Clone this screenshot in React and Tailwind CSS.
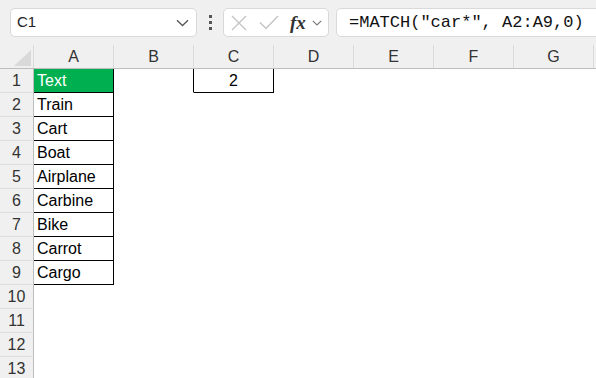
import React from "react";

const cols = ["A", "B", "C", "D", "E", "F", "G"];
const aVals = ["Text", "Train", "Cart", "Boat", "Airplane", "Carbine", "Bike", "Carrot", "Cargo"];

function Cell({ r, c }) {
  let border = "border-transparent";
  let bg = "";
  let content = null;
  if (c === 0 && r <= 9) {
    border = "border-black";
    content = aVals[r - 1];
    if (r === 1) bg = "bg-[#00b050] text-white";
  }
  if (r === 1 && c === 1) border = "border-b-transparent border-r-black";
  if (r === 1 && c === 2) {
    border = "border-black";
    content = "2";
  }
  return (
    <div
      className={`w-[80px] h-[24px] shrink-0 border-r border-b ${border} ${bg} flex items-center ${
        c === 2 ? "justify-center" : "pl-[3px]"
      }`}
    >
      {content}
    </div>
  );
}

export default function App() {
  const rows = Array.from({ length: 13 }, (_, i) => i + 1);
  return (
    <div
      className="w-[596px] h-[378px] overflow-hidden bg-white text-[16px] text-black"
      style={{ fontFamily: '"Liberation Sans", Arial, sans-serif' }}
    >
      {/* toolbar */}
      <div className="h-[45px] bg-[#f0f0f0] flex items-start pt-[8px] pl-[10px] overflow-hidden">
        <div className="w-[187px] h-[29px] shrink-0 rounded-[5px] bg-white border border-[#d9d9d9] flex items-center pl-[6px] pr-[7px] text-[15px] text-[#222]">
          <span className="flex-1">C1</span>
          <svg width="13" height="8" viewBox="0 0 13 8" fill="none">
            <path d="M1 1.2 L6.5 6.5 L12 1.2" stroke="#555" strokeWidth="1.3" />
          </svg>
        </div>
        <div className="w-[26px] h-[29px] shrink-0 flex flex-col items-center justify-center gap-[3px]">
          <div className="w-[3px] h-[3px] bg-[#555]" />
          <div className="w-[3px] h-[3px] bg-[#555]" />
          <div className="w-[3px] h-[3px] bg-[#555]" />
        </div>
        <div className="w-[106px] h-[29px] shrink-0 rounded-[5px] bg-white border border-[#d9d9d9] flex items-center pl-[7px]">
          <svg width="16" height="16" viewBox="0 0 16 16" fill="none">
            <path d="M1 1 L15 15 M15 1 L1 15" stroke="#c4c4c4" strokeWidth="1.4" />
          </svg>
          <svg className="ml-[12px]" width="20" height="15" viewBox="0 0 20 15" fill="none">
            <path d="M1 7.5 L7 13.5 L19 1" stroke="#c4c4c4" strokeWidth="1.4" />
          </svg>
          <span
            className="ml-[11px] italic font-bold text-[19px] text-[#333] leading-none"
            style={{ fontFamily: '"Liberation Serif", "Times New Roman", serif' }}
          >
            fx
          </span>
          <svg className="ml-[6px]" width="10" height="6" viewBox="0 0 10 6" fill="none">
            <path d="M0.8 0.8 L5 5 L9.2 0.8" stroke="#777" strokeWidth="1.1" />
          </svg>
        </div>
        <div
          className="ml-[7px] w-[280px] h-[29px] shrink-0 rounded-[5px] bg-white border border-[#d9d9d9] flex items-center pl-[12px] text-[17px] text-[#111]"
          style={{ fontFamily: '"Liberation Mono", "DejaVu Sans Mono", monospace' }}
        >
          =MATCH("car*", A2:A9,0)
        </div>
      </div>

      {/* column headers */}
      <div className="h-[24px] flex bg-[#f0f0f0] border-b border-[#bdbdbd] text-[#333]">
        <div className="w-[34px] h-[23px] shrink-0 border-r border-[#dadada] flex items-end justify-end pr-[2px] pb-[2px]">
          <svg width="17" height="16" viewBox="0 0 17 16">
            <path d="M17 0 L17 16 L0 16 Z" fill="#d9d9d9" />
          </svg>
        </div>
        {cols.map((c) => (
          <div
            key={c}
            className="w-[80px] h-[23px] shrink-0 border-r border-[#dadada] flex items-center justify-center"
          >
            {c}
          </div>
        ))}
      </div>

      {/* rows */}
      {rows.map((r) => (
        <div key={r} className="flex h-[24px]">
          <div className="w-[34px] h-[24px] shrink-0 bg-[#f0f0f0] border-r border-b border-r-[#bdbdbd] border-b-[#dedede] flex items-center justify-center text-[#333]">
            {r}
          </div>
          {cols.map((c, ci) => (
            <Cell key={c} r={r} c={ci} />
          ))}
        </div>
      ))}
    </div>
  );
}
